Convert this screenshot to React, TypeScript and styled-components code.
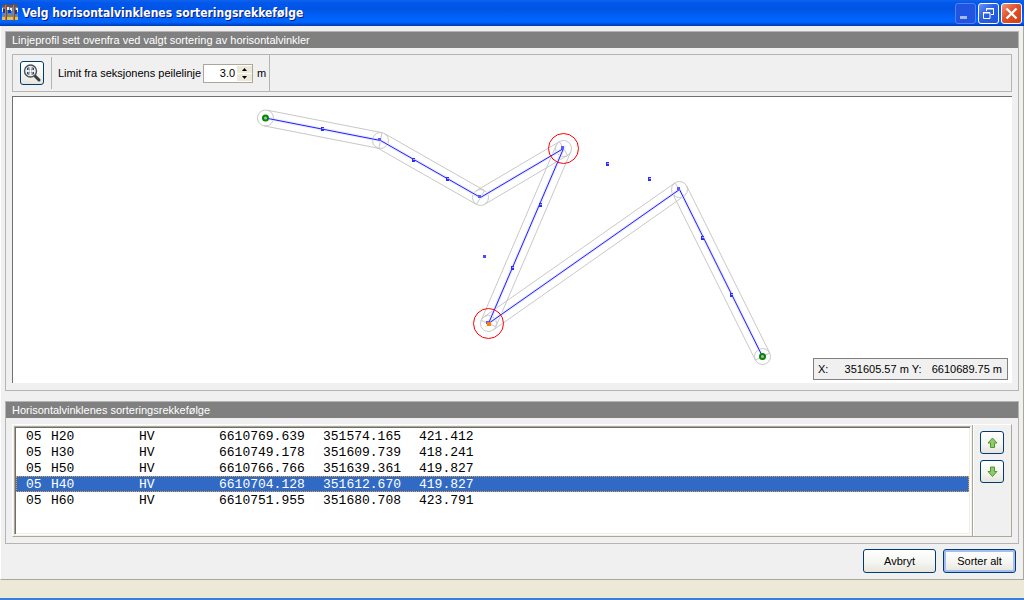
import React, { useState } from "react";
import styled, { createGlobalStyle, css } from "styled-components";

const GlobalStyle = createGlobalStyle`
  *, *::before, *::after { box-sizing: border-box; }
  body { margin: 0; background: #ece9d8; }
  button, input { font: inherit; color: inherit; margin: 0; padding: 0; }
`;

const Page = styled.div`
  display: flex;
  flex-direction: column;
  min-height: 100vh;
  font: 11px/14px "Liberation Sans", Arial, sans-serif;
  color: #000;
`;

const TitleBar = styled.header`
  display: flex;
  align-items: center;
  gap: 2px;
  height: 26px;
  padding: 0 2px;
  background: linear-gradient(#1262e8 0, #0058ee 3px, #0054e3 9px, #0062fb 17px, #0066ff 22px, #004fd8 24px, #003bb5 26px);
`;

const Title = styled.h1`
  flex: 1;
  margin: 0 0 0 2px;
  font: bold 12px/16px "DejaVu Sans Condensed", "DejaVu Sans", sans-serif;
  color: #fff;
  text-shadow: 1px 1px 0 #0a1883;
`;

const CaptionButton = styled.button<{ $tone: "dim" | "blue" | "red" }>`
  display: grid;
  place-items: center;
  width: 21px;
  height: 21px;
  border: 1px solid #fff;
  border-radius: 3px;
  background: linear-gradient(135deg, #6b93f5, #2a5fe0 45%, #1f55dd);
  ${(p) => p.$tone === "dim" && css`
    border-color: #5580ee;
    background: #2055e2;
  `}
  ${(p) => p.$tone === "red" && css`
    background: linear-gradient(135deg, #f0967a, #e0502a 45%, #d2400f);
  `}
`;

const Client = styled.main`
  flex: 1;
  display: flex;
  flex-direction: column;
  padding: 5px 4px 6px;
  background: #f0f0f0;
  border-left: 1px solid #fff;
  border-right: 1px solid #aca899;
  border-bottom: 1px solid #aca899;
`;

const Group = styled.section<{ $grow?: boolean }>`
  display: flex;
  flex-direction: column;
  flex: ${(p) => (p.$grow ? "1 0 auto" : "none")};
  margin-bottom: ${(p) => (p.$grow ? 10 : 5)}px;
  border: 1px solid #b4b4b4;
`;

const GroupTitle = styled.h2`
  margin: 0;
  height: 16px;
  padding-left: 6px;
  background: #808080;
  color: #fff;
  font: inherit;
  line-height: 16px;
`;

const Toolbar = styled.div`
  display: flex;
  height: 38px;
  margin: 6px 6px 4px;
  border: 1px solid #b4b4b4;
`;

const ToolSection = styled.div`
  display: flex;
  align-items: center;
  padding: 0 3px 0 7px;
  border-right: 1px solid #b4b4b4;
`;

const ToolDivider = styled.span`
  width: 1px;
  height: 32px;
  margin: 0 6px 0 7px;
  background: #b4b4b4;
`;

const xpButton = css`
  display: grid;
  place-items: center;
  border: 1px solid #003c74;
  border-radius: 3px;
  background: linear-gradient(#fff, #f4f4f0 60%, #e6e4dc);
`;

const IconButton = styled.button<{ $height: number }>`
  ${xpButton}
  width: 24px;
  height: ${(p) => p.$height}px;
`;

const PushButton = styled.button<{ $primary?: boolean }>`
  ${xpButton}
  width: 73px;
  height: 24px;
  ${(p) => p.$primary && css`
    box-shadow: inset 0 0 0 2px #a5bdf0;
  `}
`;

const Spinner = styled.span`
  display: flex;
  width: 50px;
  height: 19px;
  margin: 0 4px 0 2px;
  padding: 1px;
  border: 1px solid #aca899;
  background: #fff;
`;

const SpinnerInput = styled.input`
  width: 30px;
  flex: 1;
  border: 0;
  outline: 0;
  background: none;
  text-align: right;
`;

const SpinnerKeys = styled.span`
  display: flex;
  flex-direction: column;
  gap: 1px;
  margin-left: 2px;
`;

const SpinKey = styled.button`
  display: grid;
  place-items: center;
  width: 15px;
  height: 7px;
  border: 0;
  background: #ece9d8;
`;

const Canvas = styled.div`
  position: relative;
  flex: 1;
  min-height: 287px;
  margin: 0 6px 7px;
  background: #fff;
  border-top: 1px solid #707070;
  border-left: 1px solid #707070;
`;

const Plot = styled.svg`
  position: absolute;
  inset: 0;
  width: 100%;
  height: 100%;
`;

const Readout = styled.div`
  position: absolute;
  right: 4px;
  bottom: 3px;
  display: flex;
  align-items: center;
  width: 195px;
  height: 22px;
  padding: 0 5px 0 4px;
  border: 1px solid #808080;
  background: #f0f0f0;
`;

const ReadoutValue = styled.span`
  flex: 1;
  text-align: right;
  margin-right: 3px;
  &:last-child { margin: 0; }
`;

const ListArea = styled.div`
  display: flex;
  margin: 6px 6px 6px;
  border-top: 1px solid #fff;
  border-left: 1px solid #fff;
  border-bottom: 1px solid #aca899;
  border-right: 1px solid #aca899;
`;

const ListBox = styled.div`
  flex: 1;
  min-height: 109px;
  margin: 1px;
  background: #fff;
  border: 1px solid;
  border-color: #aca899 #fff #fff #aca899;
  box-shadow: inset 1px 1px 0 #716f64, inset -1px -1px 0 #f1efe2;
  padding: 1px;
`;

const Records = styled.table`
  width: 100%;
  table-layout: fixed;
  border-collapse: collapse;
  font: 13px/14px "Liberation Mono", "Courier New", monospace;
`;

const Record = styled.tr<{ $selected: boolean }>`
  height: 16px;
  ${(p) => p.$selected && css`
    background: #316ac5;
    color: #fff;
    outline: 1px dotted #f0a030;
    outline-offset: -1px;
  `}
`;

const Cell = styled.td<{ $first?: boolean }>`
  padding: 2px 0 0 ${(p) => (p.$first ? 10 : 0)}px;
  white-space: nowrap;
`;

const OrderPanel = styled.div`
  display: flex;
  flex-direction: column;
  gap: 6px;
  padding: 6px 7px;
  border-left: 1px solid #aca899;
  box-shadow: inset 1px 0 0 #fff;
`;

const Actions = styled.footer`
  display: flex;
  justify-content: flex-end;
  gap: 7px;
  padding-right: 3px;
`;

const StatusBar = styled.div`
  height: 20px;
  background: #ece9d8;
  border-bottom: 2px solid #3a80d8;
`;

type Point = [number, number];

const nodes: Point[] = [
  [252.5, 21], [367.5, 43.5], [467.5, 100.5], [550.5, 51.5],
  [475.5, 226.5], [666.5, 92.5], [749.5, 259.5],
];

const samples: Point[] = [
  [310, 32], [401, 63], [435, 82], [528, 108], [500, 171],
  [595, 67], [637, 82], [690, 141], [719, 198],
];

const corridor = (a: Point, b: Point, r: number) => {
  const length = Math.hypot(b[0] - a[0], b[1] - a[1]);
  const nx = (-(b[1] - a[1]) / length) * r;
  const ny = ((b[0] - a[0]) / length) * r;
  return [
    [a[0] + nx, a[1] + ny], [b[0] + nx, b[1] + ny],
    [b[0] - nx, b[1] - ny], [a[0] - nx, a[1] - ny],
  ].map((p) => p.join(",")).join(" ");
};

const ProfilePlot = () => {
  const path = nodes.map((p) => p.join(",")).join(" ");
  return (
    <Plot role="img" aria-label="Linjeprofil">
      <g fill="none" stroke="#c8c8c8">
        {nodes.slice(1).map((p, i) => (
          <polyline key={i} points={corridor(nodes[i], p, 8)} />
        ))}
        {nodes.map(([x, y]) => <circle key={x} cx={x} cy={y} r="8" />)}
      </g>
      <polyline points={path} fill="none" stroke="#e8e8ff" strokeWidth="3" />
      <polyline points={path} fill="none" stroke="#2020ff" />
      {samples.map(([x, y]) => (
        <g key={x}>
          <rect x={x - 2} y={y - 2} width="3" height="4" fill="#2c2cff" />
          <rect x={x - 1} y={y - 1} width="2" height="1" fill="#a0b0ff" />
        </g>
      ))}
      <rect x="470" y="158" width="3" height="3" fill="#4a4aff" />
      {nodes.slice(1, 6).map(([x, y]) => (
        <rect key={x} x={Math.floor(x) - 2} y={Math.floor(y) - 2} width="3" height="3" fill="#5a5aff" />
      ))}
      {[nodes[3], nodes[4]].map(([x, y]) => (
        <circle key={x} cx={x} cy={y} r="15" fill="none" stroke="#f00" />
      ))}
      <rect x="474" y="225" width="4" height="4" fill="#ff8000" />
      {[nodes[0], nodes[6]].map(([x, y]) => (
        <circle key={x} cx={x} cy={y} r="2.5" fill="#b4b4b4" stroke="#008a00" strokeWidth="2" />
      ))}
    </Plot>
  );
};

const AppIcon = () => (
  <svg width="16" height="18" viewBox="0 0 16 18" aria-hidden="true">
    <rect y="3" width="16" height="9" fill="#4a86d8" />
    <path d="M0 4h1v4H0zM5 3h2v3H5zM8 4h2v3H8zM14 4h2v4h-2z" fill="#e8f0ff" />
    <path d="M1 5h2v4H1zM6 6h3v3H6zM13 6h2v4h-2z" fill="#1238b0" />
    <path d="M0 12h16v4H0z" fill="#d8c070" />
    <path d="M0 12h16v1H0zM6 10h3v2H6z" fill="#9a8650" />
    <path d="M0 1h16v2H0zM3 0h2v17H3zM11 0h2v17h-2z" fill="#8a4a1c" />
    <path d="M3 1h1v15H3zM11 1h1v15h-1z" fill="#c07a3c" />
  </svg>
);

const ZoomExtentsIcon = () => (
  <svg width="18" height="18" viewBox="0 0 18 18" fill="none" aria-hidden="true">
    <path d="M11.5 11.5l4.500 4.500" stroke="#3c3c3c" strokeWidth="3" strokeLinecap="round" />
    <circle cx="7.500" cy="7" r="6" fill="#e8eef2" stroke="#4c5258" strokeWidth="1.400" />
    <path d="M4.500 6V4H6.500M8.500 4h2v2M10.500 8v2h-2M6.500 10h-2V8M5 4.500l5 5M10 4.500l-5 5" stroke="#3c464e" />
    <rect x="6.500" y="6" width="2" height="2" fill="#fff" />
  </svg>
);

const OrderArrow = ({ down }: { down?: boolean }) => (
  <svg width="11" height="12" viewBox="0 0 11 12" aria-hidden="true">
    <path
      d={down ? "M3.500 1h4v4.500h2.500L5.500 10.500 1 5.500h2.500z" : "M5.500 1L10 6H7.500v4.500h-4V6H1z"}
      fill="#92c873"
      stroke="#4c9a2a"
    />
  </svg>
);

const SpinArrow = ({ down }: { down?: boolean }) => (
  <svg width="5" height="3" viewBox="0 0 5 3" aria-hidden="true">
    <path d={down ? "M0 0h5L2.500 3z" : "M0 3h5L2.500 0z"} />
  </svg>
);

const columns = [35, 88, 80, 104, 96];

const initialRecords = [
  ["05", "H20", "HV", "6610769.639", "351574.165", "421.412"],
  ["05", "H30", "HV", "6610749.178", "351609.739", "418.241"],
  ["05", "H50", "HV", "6610766.766", "351639.361", "419.827"],
  ["05", "H40", "HV", "6610704.128", "351612.670", "419.827"],
  ["05", "H60", "HV", "6610751.955", "351680.708", "423.791"],
];

export default function App() {
  const [limit, setLimit] = useState("3.0");
  const [records, setRecords] = useState(initialRecords);
  const [selected, setSelected] = useState(3);

  const step = (delta: number) =>
    setLimit((value) => Math.max(0, (parseFloat(value) || 0) + delta).toFixed(1));

  const move = (delta: number) => {
    const target = selected + delta;
    if (target < 0 || target >= records.length) return;
    const next = [...records];
    [next[selected], next[target]] = [next[target], next[selected]];
    setRecords(next);
    setSelected(target);
  };

  return (
    <Page>
      <GlobalStyle />
      <TitleBar>
        <AppIcon />
        <Title>Velg horisontalvinklenes sorteringsrekkefølge</Title>
        <CaptionButton $tone="dim" aria-label="Minimer">
          <svg width="19" height="19"><path d="M4 12h7v3H4z" fill="#a6b8f0" /></svg>
        </CaptionButton>
        <CaptionButton $tone="blue" aria-label="Gjenopprett">
          <svg width="19" height="19" fill="none" stroke="#fff">
            <path d="M7 5h8M14.500 4v7M7.500 4v3M12 10.500h3M4 9h7" />
            <path d="M7 4.500h8M4 8.500h7v6H4.500V9" />
          </svg>
        </CaptionButton>
        <CaptionButton $tone="red" aria-label="Lukk">
          <svg width="19" height="19"><path d="M4.500 4.500l10 10M14.500 4.500l-10 10" stroke="#fff" strokeWidth="2.400" /></svg>
        </CaptionButton>
      </TitleBar>

      <Client>
        <Group $grow>
          <GroupTitle>Linjeprofil sett ovenfra ved valgt sortering av horisontalvinkler</GroupTitle>
          <Toolbar>
            <ToolSection>
              <IconButton $height={24} aria-label="Zoom til alt"><ZoomExtentsIcon /></IconButton>
              <ToolDivider />
              <label htmlFor="limit">Limit fra seksjonens peilelinje</label>
              <Spinner>
                <SpinnerInput id="limit" value={limit} onChange={(e) => setLimit(e.target.value)} />
                <SpinnerKeys>
                  <SpinKey aria-label="Øk" onClick={() => step(0.1)}><SpinArrow /></SpinKey>
                  <SpinKey aria-label="Reduser" onClick={() => step(-0.1)}><SpinArrow down /></SpinKey>
                </SpinnerKeys>
              </Spinner>
              m
            </ToolSection>
          </Toolbar>
          <Canvas>
            <ProfilePlot />
            <Readout>
              <span>X:</span>
              <ReadoutValue>351605.57 m</ReadoutValue>
              <span>Y:</span>
              <ReadoutValue>6610689.75 m</ReadoutValue>
            </Readout>
          </Canvas>
        </Group>

        <Group>
          <GroupTitle>Horisontalvinklenes sorteringsrekkefølge</GroupTitle>
          <ListArea>
            <ListBox>
              <Records>
                <colgroup>
                  {columns.map((width, i) => <col key={i} width={width} />)}
                  <col />
                </colgroup>
                <tbody>
                  {records.map((record, row) => (
                    <Record
                      key={record[1]}
                      $selected={row === selected}
                      aria-selected={row === selected}
                      onClick={() => setSelected(row)}
                    >
                      {record.map((value, i) => <Cell key={i} $first={i === 0}>{value}</Cell>)}
                    </Record>
                  ))}
                </tbody>
              </Records>
            </ListBox>
            <OrderPanel>
              <IconButton $height={23} aria-label="Flytt opp" onClick={() => move(-1)}><OrderArrow /></IconButton>
              <IconButton $height={23} aria-label="Flytt ned" onClick={() => move(1)}><OrderArrow down /></IconButton>
            </OrderPanel>
          </ListArea>
        </Group>

        <Actions>
          <PushButton>Avbryt</PushButton>
          <PushButton $primary>Sorter alt</PushButton>
        </Actions>
      </Client>
      <StatusBar />
    </Page>
  );
}
